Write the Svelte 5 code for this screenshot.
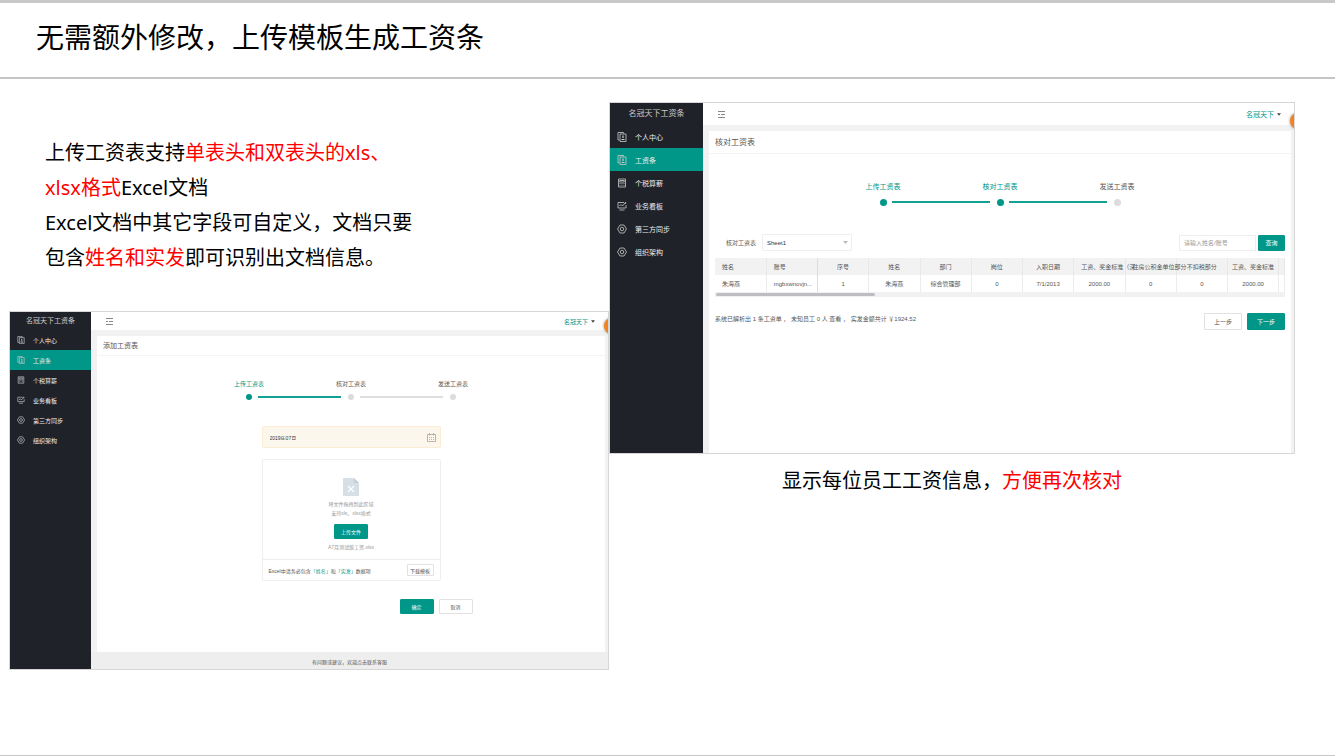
<script>
  const menus = [
    { label: "个人中心", icon: "sheet" },
    { label: "工资条", icon: "sheet", active: true },
    { label: "个税算薪", icon: "calc" },
    { label: "业务看板", icon: "board" },
    { label: "第三方同步", icon: "gear" },
    { label: "组织架构", icon: "gear" },
  ];
  const steps = ["上传工资表", "核对工资表", "发送工资表"];
  const columns = [
    { title: "姓名", value: "朱海燕", align: "start" },
    { title: "账号", value: "mgbxwnovjn...", align: "start fixed" },
    { title: "序号", value: "1" },
    { title: "姓名", value: "朱海燕" },
    { title: "部门", value: "综合管理部" },
    { title: "岗位", value: "0" },
    { title: "入职日期", value: "7/1/2013" },
    { title: "工资、奖金标准（深", value: "2000.00", align: "long" },
    { title: "住房公积金单位部分", value: "0", align: "long" },
    { title: "不扣税部分", value: "0" },
    { title: "工资、奖金标准", value: "2000.00" },
  ];
  let month = $state("2019年07月");
  let keyword = $state("");
</script>

{#snippet icon(name)}
  <svg class="icon" viewBox="0 0 20 20" fill="none" stroke="currentColor" stroke-width="1.6" aria-hidden="true">
    {#if name === "sheet"}
      <path d="M5 16H2V1h11v2" />
      <path d="M6 4h12v15H6z" />
      <path d="M12 7v5M9 15h6" stroke-width="2.4" />
    {:else if name === "calc"}
      <path d="M3 2h14v16H3zM5.5 5h9v3h-9zM5 11h2m2 0h2m2 0h2M5 14.500h2m2 0h2m2 0h2" />
    {:else if name === "board"}
      <path d="M14 3H2v11h16V8M5 18h10M5 10l3-3 3 3 6-7" />
      <circle cx="17" cy="4" r="1" />
    {:else}
      <path d="M6 2h8l5 8-5 8H6l-5-8z" />
      <circle cx="10" cy="10" r="3.500" />
    {/if}
  </svg>
{/snippet}

{#snippet sidebar()}
  <nav class="sidebar">
    <div class="brand">名冠天下工资条</div>
    {#each menus as item}
      <a href="#menu" class:active={item.active}>
        {@render icon(item.icon)}
        <span>{item.label}</span>
      </a>
    {/each}
  </nav>
{/snippet}

{#snippet topbar()}
  <div class="topbar">
    <button class="fold" aria-label="收起菜单">
      <svg viewBox="0 0 7 7" fill="none" stroke="#888"><path d="M0 .5h7M0 3.500h2m1 0h4M0 6.500h7" /></svg>
    </button>
    <button class="user">名冠天下
      <svg viewBox="0 0 10 6"><path d="M0 0h10L5 6z" fill="#444" /></svg>
    </button>
    <span class="bubble"></span>
  </div>
{/snippet}

{#snippet stepper(current)}
  <ol class="steps">
    {#each steps as step, i}
      <li class:done={i <= current}>
        <span class="name">{step}</span>
        <span class="track"><i class="dot"></i></span>
      </li>
    {/each}
  </ol>
{/snippet}

<main>
  <header><h1>无需额外修改，上传模板生成工资条</h1></header>

  <div class="content">
    <section>
      <p class="intro">
        上传工资表支持<em>单表头和双表头的xls、</em><br />
        <em>xlsx格式</em>Excel文档<br />
        Excel文档中其它字段可自定义，文档只要<br />
        包含<em>姓名和实发</em>即可识别出文档信息。
      </p>

      <div class="shot small">
        {@render sidebar()}
        <div class="body">
          {@render topbar()}
          <div class="card">
            <h2>添加工资表</h2>
            {@render stepper(0)}
            <div class="form">
              <div class="month">
                <input aria-label="月份" bind:value={month} />
                <svg viewBox="0 0 18 18" fill="none" stroke="#aaa08c" stroke-width="1.5">
                  <path d="M1 3h16v14H1zM5 0v5M13 0v5" />
                  <path d="M5 8v6M9 8v6M13 8v6" stroke-dasharray="2 2" />
                </svg>
              </div>
              <div class="upload">
                <div class="drop">
                  <svg viewBox="0 0 16 18">
                    <path d="M0 0h11l5 5v13H0z" fill="#d6dee6" />
                    <path d="M11 0l5 5h-5z" fill="#c3ced9" />
                    <path d="M5 8l6 6m0-6l-6 6" stroke="#fff" stroke-width="1.200" />
                  </svg>
                  <p>将文件拖拽到此区域<br />支持xls、xlsx格式</p>
                  <button class="btn primary">上传文件</button>
                  <p>A7月测试版工资.xlsx</p>
                </div>
                <div class="tip">
                  <span>Excel中请务必包含<b>「姓名」</b>和<b>「实发」</b>数据项</span>
                  <button class="btn">下载模板</button>
                </div>
              </div>
            </div>
            <div class="actions">
              <button class="btn primary">确定</button>
              <button class="btn">取消</button>
            </div>
          </div>
          <div class="service">有问题或建议，欢迎点击联系客服</div>
        </div>
      </div>
    </section>

    <section>
      <div class="shot large">
        {@render sidebar()}
        <div class="body">
          {@render topbar()}
          <div class="card">
            <h2>核对工资表</h2>
            {@render stepper(1)}
            <div class="filter">
              <label for="sheet">核对工资表</label>
              <div class="select">
                <select id="sheet"><option>Sheet1</option></select>
                <svg viewBox="0 0 10 6"><path d="M0 0h10L5 6z" fill="#bbb" /></svg>
              </div>
              <input class="search" aria-label="姓名/账号" placeholder="请输入姓名/账号" bind:value={keyword} />
              <button class="btn primary">查询</button>
            </div>
            <div class="grid">
              <table>
                <thead>
                  <tr>
                    {#each columns as col}<th class={col.align}>{col.title}</th>{/each}
                    <th class="rest"></th>
                  </tr>
                </thead>
                <tbody>
                  <tr>
                    {#each columns as col}<td class={col.align === "long" ? "" : col.align}>{col.value}</td>{/each}
                    <td class="rest"></td>
                  </tr>
                </tbody>
              </table>
              <div class="scroll"><div class="thumb"></div></div>
            </div>
            <div class="summary">
              <span>系统已解析出 1 条工资单 ， 未知员工 0 人 查看 ， 实发金额共计 ￥1924.52</span>
              <button class="btn">上一步</button>
              <button class="btn primary">下一步</button>
            </div>
          </div>
        </div>
      </div>
      <p class="caption">显示每位员工工资信息，<em>方便再次核对</em></p>
    </section>
  </div>
</main>

<style>
  :global(body) {
    margin: 0;
    background: #fff;
  }
  main {
    box-sizing: border-box;
    min-height: 100vh;
    border-top: 3px solid #c8c8c8;
    border-bottom: 1px solid #c8c8c8;
    font-family: "Noto Sans", "Noto Sans CJK SC", sans-serif;
    color: #000;
  }
  main *,
  main *::before {
    box-sizing: border-box;
  }
  header {
    height: 76px;
    padding: 14px 36px 0;
    border-bottom: 2px solid #c5c5c5;
  }
  h1 {
    margin: 0;
    font-size: 28px;
    font-weight: 400;
    line-height: 40px;
  }
  h2,
  p,
  ol {
    margin: 0;
    padding: 0;
    font-weight: 400;
  }
  em {
    color: #f00;
    font-style: normal;
  }
  .content {
    display: grid;
    grid-template-columns: 600fr 686fr;
    align-items: start;
    padding: 23px 40px 32px 9px;
  }
  .intro {
    padding: 33px 0 36px 36px;
    font-size: 20px;
    line-height: 35px;
    white-space: nowrap;
  }
  .caption {
    margin-top: 9px;
    font-size: 20px;
    line-height: 35px;
    text-align: center;
  }

  .shot {
    display: flex;
    border: 1px solid #d6d6d6;
    font-family: "Liberation Sans", "Noto Sans CJK SC", sans-serif;
    color: #555;
    overflow: hidden;
  }
  .small {
    --side: 81px;
    --row: 20px;
    --bar: 18px;
    --brand: 7px;
    --text: 6px;
    --tiny: 5px;
    --gap: 6px;
    --icon: 8px;
    --step: 102px;
    --dot: 6px;
  }
  .large {
    --side: 93px;
    --row: 23px;
    --bar: 22px;
    --brand: 8px;
    --text: 7px;
    --tiny: 6px;
    --gap: 6px;
    --icon: 10px;
    --step: 117px;
    --dot: 7px;
  }
  .shot button,
  .shot input,
  .shot select {
    margin: 0;
    padding: 0;
    border: 0;
    background: none;
    font-family: inherit;
    font-size: var(--tiny);
    color: inherit;
    outline: none;
  }

  .sidebar {
    flex: none;
    width: var(--side);
    background: #20222a;
    color: #eee;
  }
  .brand {
    height: var(--bar);
    font-size: var(--brand);
    line-height: var(--bar);
    text-align: center;
    color: #ccc;
  }
  .sidebar a {
    display: flex;
    align-items: center;
    gap: 8px;
    height: var(--row);
    padding-left: 7px;
    font-size: var(--text);
    color: inherit;
    text-decoration: none;
  }
  .sidebar a.active {
    background: #009688;
  }
  .icon {
    width: var(--icon);
    height: var(--icon);
    color: #ccc;
  }

  .body {
    flex: 1;
    display: flex;
    flex-direction: column;
    min-width: 0;
    background: #f2f2f2;
  }
  .topbar {
    position: relative;
    display: flex;
    align-items: center;
    justify-content: space-between;
    height: var(--bar);
    padding: 0 13px 0 15px;
    background: #fff;
  }
  .fold svg {
    display: block;
    width: 7px;
    height: 7px;
  }
  .shot .user {
    display: flex;
    align-items: center;
    gap: 3px;
    font-size: var(--text);
    color: #009688;
  }
  .user svg {
    width: 4px;
    height: 3px;
  }
  /* customer service bubble, half hidden behind the edge */
  .bubble {
    position: absolute;
    top: calc(var(--bar) - 12px);
    right: -12px;
    width: 16px;
    height: 16px;
    border-radius: 50%;
    background: #f5821f;
    box-shadow: 0 0 3px #888;
  }
  .card {
    flex: 1;
    margin: var(--gap) 3px 0 var(--gap);
    background: #fff;
  }
  h2 {
    height: var(--row);
    padding-left: 6px;
    border-bottom: 1px solid #f4f4f4;
    font-size: var(--brand);
    line-height: var(--row);
  }

  .steps {
    display: flex;
    justify-content: center;
    list-style: none;
    font-size: var(--text);
    line-height: 12px;
    text-align: center;
  }
  .small .steps {
    padding: 22px 0 26px;
  }
  .large .steps {
    padding: 27px 0 28px;
  }
  .steps li {
    width: var(--step);
  }
  .name {
    display: block;
  }
  .done .name {
    color: #009688;
  }
  .track {
    position: relative;
    display: flex;
    justify-content: center;
    margin-top: 4px;
  }
  .large .track {
    margin-top: 6px;
  }
  .dot {
    width: var(--dot);
    height: var(--dot);
    border-radius: 50%;
    background: #dcdcdc;
  }
  .done .dot {
    background: #009688;
  }
  li:not(:last-child) .track::before {
    content: "";
    position: absolute;
    top: 2px;
    left: calc(50% + 9px);
    width: calc(100% - 19px);
    height: 2px;
    background: #dedede;
  }
  li.done:not(:last-child) .track::before {
    background: #12a294;
  }

  .shot .btn {
    border: 1px solid #e2e2e2;
    border-radius: 1px;
    background: #fff;
    text-align: center;
    white-space: nowrap;
  }
  .shot .btn.primary {
    border-color: #009688;
    background: #009688;
    color: #fff;
  }

  .form {
    width: 179px;
    margin: 0 auto;
    font-size: 5px;
  }
  .month {
    display: flex;
    align-items: center;
    height: 22px;
    padding: 0 4px 0 7px;
    border: 1px solid #fcecd4;
    border-radius: 2px;
    background: #fbf7ec;
    color: #333;
  }
  .month input {
    flex: 1;
    min-width: 0;
  }
  .month svg {
    width: 9px;
    height: 9px;
  }
  .upload {
    margin-top: 11px;
    border: 1px solid #eee;
    border-radius: 2px;
  }
  .drop {
    display: flex;
    flex-direction: column;
    align-items: center;
    padding: 18px 0 7px;
    line-height: 9px;
    text-align: center;
    color: #999;
  }
  .drop svg {
    width: 16px;
    height: 18px;
    margin-bottom: 4px;
  }
  .drop .btn {
    width: 34px;
    height: 15px;
    margin: 6px 0 4px;
  }
  .tip {
    display: flex;
    align-items: center;
    justify-content: space-between;
    height: 21px;
    padding: 0 6px;
    border-top: 1px solid #eee;
    white-space: nowrap;
  }
  .tip b {
    font-weight: 400;
    color: #009688;
  }
  .tip .btn {
    width: 27px;
    height: 12px;
  }
  .actions {
    display: flex;
    justify-content: flex-end;
    gap: 5px;
    width: 243px;
    margin: 18px auto 38px;
  }
  .actions .btn {
    width: 34px;
    height: 15px;
  }
  .service {
    height: 17px;
    background: #eee;
    font-size: 5px;
    line-height: 20px;
    text-align: center;
  }

  .large .card {
    padding-bottom: 123px;
  }
  .filter {
    display: flex;
    align-items: center;
    padding: 0 6px 0 17px;
    font-size: 6px;
  }
  .select {
    position: relative;
    width: 90px;
    margin: 0 auto 0 6px;
  }
  .select select {
    display: block;
    width: 100%;
    height: 17px;
    padding-left: 4px;
    border: 1px solid #eee;
    border-radius: 1px;
    appearance: none;
    color: #333;
  }
  .select svg {
    position: absolute;
    top: 7px;
    right: 4px;
    width: 5px;
    height: 3px;
  }
  .filter .search {
    width: 77px;
    height: 16px;
    margin-right: 2px;
    padding-left: 4px;
    border: 1px solid #eee;
  }
  .search::placeholder {
    color: #999;
  }
  .filter .btn {
    width: 27px;
    height: 16px;
  }
  .grid {
    margin: 7px 6px 0;
    overflow: hidden;
  }
  table {
    width: 100%;
    table-layout: fixed;
    border-collapse: collapse;
    font-size: 6px;
  }
  th,
  td {
    width: 9%;
    height: 17px;
    padding: 0;
    border-right: 1px solid #ececec;
    font-weight: 400;
    line-height: 10px;
    text-align: center;
    white-space: nowrap;
  }
  th {
    background: #f2f2f2;
    border-right-color: #e8e8e8;
  }
  .start,
  .long {
    padding-left: 7px;
    text-align: left;
  }
  .fixed {
    border-right-color: #ddd;
  }
  .rest {
    width: 1%;
  }
  .scroll {
    height: 5px;
    padding: 1px;
    background: #f1f1f1;
  }
  .thumb {
    width: 28%;
    height: 3px;
    border-radius: 2px;
    background: #bdbdc3;
  }
  .summary {
    display: flex;
    align-items: center;
    gap: 5px;
    margin: 16px 6px 0;
    font-size: 6px;
  }
  .summary span {
    flex: 1;
    padding-bottom: 6px;
    white-space: pre;
  }
  .summary .btn {
    width: 38px;
    height: 17px;
  }
</style>
